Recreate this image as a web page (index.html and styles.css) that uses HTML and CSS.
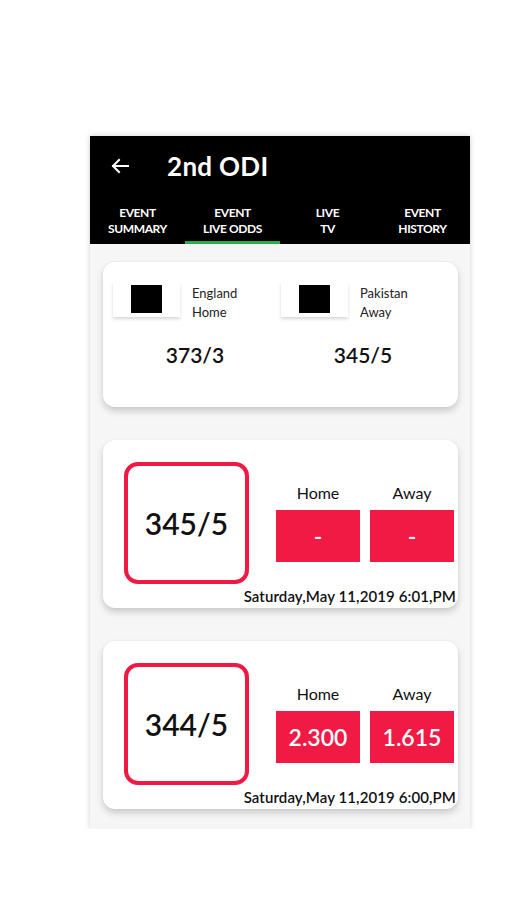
FILE: index.html
```html
<!DOCTYPE html>
<html lang="en">
<head>
<meta charset="utf-8">
<title>2nd ODI</title>
<link rel="stylesheet" href="styles.css">
</head>
<body>
<div class="phone">
  <header class="appbar">
    <div class="titlerow">
      <svg class="back" width="18" height="16" viewBox="0 0 18 16" aria-hidden="true">
        <path d="M17 8H2M8 2L2 8l6 6" fill="none" stroke="#fff" stroke-width="2" stroke-linecap="square"/>
      </svg>
      <h1 class="title">2nd ODI</h1>
    </div>
    <nav class="tabs">
      <div class="tab">EVENT<br>SUMMARY</div>
      <div class="tab active">EVENT<br>LIVE ODDS</div>
      <div class="tab">LIVE<br>TV</div>
      <div class="tab">EVENT<br>HISTORY</div>
    </nav>
  </header>
  <main class="content">
    <section class="card teams-card">
      <div class="teams">
        <div class="team">
          <div class="team-head">
            <div class="flag"><span class="flag-sq"></span></div>
            <div class="team-name">England<br>Home</div>
          </div>
          <div class="team-score">373/3</div>
        </div>
        <div class="team">
          <div class="team-head">
            <div class="flag"><span class="flag-sq"></span></div>
            <div class="team-name">Pakistan<br>Away</div>
          </div>
          <div class="team-score">345/5</div>
        </div>
      </div>
    </section>

    <section class="card odds-card">
      <div class="odds-row">
        <div class="score-box">345/5</div>
        <div class="odds">
          <div class="odds-label">Home</div>
          <div class="odds-label">Away</div>
          <div class="odds-val">-</div>
          <div class="odds-val">-</div>
        </div>
      </div>
      <div class="date">Saturday,May 11,2019 6:01,PM</div>
    </section>

    <section class="card odds-card">
      <div class="odds-row">
        <div class="score-box">344/5</div>
        <div class="odds">
          <div class="odds-label">Home</div>
          <div class="odds-label">Away</div>
          <div class="odds-val">2.300</div>
          <div class="odds-val">1.615</div>
        </div>
      </div>
      <div class="date">Saturday,May 11,2019 6:00,PM</div>
    </section>
  </main>
</div>
</body>
</html>
```

FILE: styles.css
```css
* { box-sizing: border-box; }

body {
  margin: 0;
  background: #ffffff;
  font-family: Lato, "Open Sans", "DejaVu Sans", sans-serif;
  color: #111;
}

.phone {
  width: 380px;
  margin: 136px 0 0 90px;
  background: #f6f6f6;
  box-shadow: 0 0 6px rgba(0, 0, 0, 0.18);
}

.appbar {
  background: #000;
  color: #fff;
}

.titlerow {
  height: 60px;
  display: flex;
  align-items: center;
  padding-left: 21px;
}

.back { display: block; }

.title {
  margin: 0 0 0 38px;
  font-size: 26px;
  font-weight: 700;
  letter-spacing: 0.3px;
  line-height: 30px;
}

.tabs {
  display: grid;
  grid-template-columns: repeat(4, 1fr);
  height: 48px;
}

.tab {
  display: flex;
  align-items: center;
  justify-content: center;
  text-align: center;
  font-size: 12px;
  font-weight: 700;
  line-height: 16px;
  letter-spacing: -0.4px;
  padding-top: 4px;
  border-bottom: 3px solid transparent;
}

.tab.active { border-bottom-color: #27b04a; }

.content {
  display: flex;
  flex-direction: column;
  gap: 33px;
  padding: 18px 12px 20px 13px;
}

.card {
  background: #fff;
  border-radius: 12px;
  box-shadow: 0 4px 7px rgba(0, 0, 0, 0.18), 0 0 2px rgba(0, 0, 0, 0.06);
}

.teams-card {
  height: 145px;
  padding: 20px 0 0 10px;
}

.teams {
  display: flex;
  gap: 4px;
}

.team { width: 164px; }

.team-head {
  display: flex;
  gap: 12px;
}

.flag {
  width: 67px;
  height: 35px;
  background: #fff;
  box-shadow: 0 2px 3px rgba(0, 0, 0, 0.16);
  display: flex;
  justify-content: center;
  padding-top: 3px;
}

.flag-sq {
  display: block;
  width: 31px;
  height: 28px;
  background: #000;
}

.team-name {
  margin-top: 2px;
  font-size: 13px;
  line-height: 19px;
  color: #222;
}

.team-score {
  margin-top: 20px;
  text-align: center;
  font-size: 21px;
  font-weight: 600;
  line-height: 26px;
  color: #111;
}

.odds-card {
  padding: 22px 2px 3px 21px;
}

.odds-row {
  display: flex;
}

.score-box {
  width: 125px;
  height: 122px;
  border: 4px solid #ef1944;
  border-radius: 14px;
  display: flex;
  align-items: center;
  justify-content: center;
  font-size: 30px;
  font-weight: 600;
  color: #111;
}

.odds {
  margin-left: 27px;
  padding-top: 22px;
  display: grid;
  grid-template-columns: 84px 84px;
  grid-template-rows: 18px 52px;
  column-gap: 10px;
  row-gap: 8px;
  align-content: start;
}

.odds-label {
  text-align: center;
  font-size: 16px;
  line-height: 18px;
  color: #111;
}

.odds-val {
  background: #f11a45;
  color: #fff;
  display: flex;
  align-items: center;
  justify-content: center;
  font-size: 23px;
  font-weight: 600;
}

.date {
  margin-top: 4px;
  text-align: right;
  font-size: 15px;
  font-weight: 600;
  line-height: 17px;
  letter-spacing: 0.1px;
  color: #111;
}
```
